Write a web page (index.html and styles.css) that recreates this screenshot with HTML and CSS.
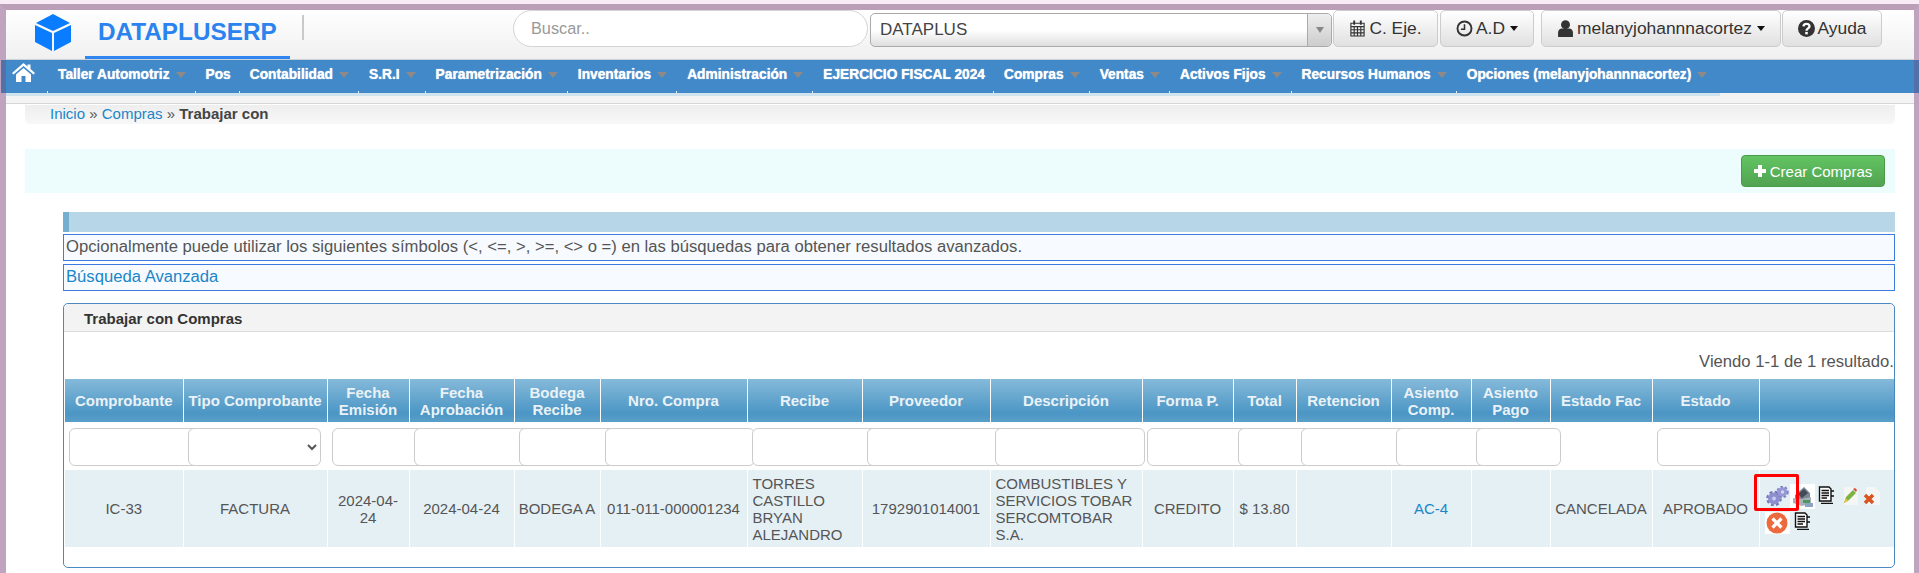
FILE: index.html
```html
<!DOCTYPE html>
<html lang="es">
<head>
<meta charset="utf-8">
<title>DATAPLUSERP</title>
<link rel="stylesheet" href="styles.css">
</head>
<body>
<div class="frame">
  <header class="top">
    <svg class="cube" viewBox="0 0 36 37"><path fill="#0a7cff" d="M18 0 35 9 18 17 1 9Z"/><path fill="#0a7cff" d="M0 11 17 19V37L0 28Z"/><path fill="#0a7cff" d="M36 11 19 19V37L36 28Z"/></svg>
    <div class="brand">DATAPLUSERP</div>
    <div class="vline"></div>
    <input class="search" type="text" placeholder="Buscar..">
    <div class="combo"><span class="combo-text">DATAPLUS</span><span class="combo-arrow"><i></i></span></div>
    <a class="btn b1"><svg class="ic" viewBox="0 0 16 18"><path fill="none" stroke="#333" stroke-width="1.2" d="M1 3.5H15V17H1ZM1 7H15M1 10.3H15M1 13.6H15M4.5 7V17M8 7V17M11.5 7V17"/><path stroke="#333" stroke-width="2" d="M4.5 0.5V5M11.5 0.5V5"/></svg>C. Eje.</a>
    <a class="btn b2"><svg class="ic" viewBox="0 0 16 16"><circle cx="8" cy="8" r="6.6" fill="none" stroke="#333" stroke-width="1.8"/><path fill="none" stroke="#333" stroke-width="1.5" d="M8 4V8.7H4.6"/></svg>A.D<i class="dd"></i></a>
    <a class="btn b3"><svg class="ic" viewBox="0 0 14 16"><circle cx="7" cy="4.4" r="4.2" fill="#333"/><path fill="#333" d="M0 16V11.5C0 9.5 2 8 3.5 8H10.500C12 8 14 9.500 14 11.500V16Z"/></svg>melanyjohannnacortez<i class="dd"></i></a>
    <a class="btn b4"><svg class="ic" viewBox="0 0 16 16"><circle cx="8" cy="8" r="8" fill="#333"/><path fill="none" stroke="#fff" stroke-width="2.200" d="M5.200 6C5.300 2.800 10.800 2.800 10.800 5.900C10.800 8 8 7.800 8 10"/><rect x="6.800" y="11.200" width="2.400" height="2.300" fill="#fff"/></svg>Ayuda</a>
  </header>
  <nav class="nav">
    <a class="home"><svg viewBox="0 0 23 19"><path fill="#fff" d="M11.500 0 15.500 3.500V1.500H18.500V6L23 10 21.500 11.500 11.500 3 1.500 11.500 0 10Z"/><path fill="#fff" d="M4 11.500 11.500 5 19 11.500V19H13.500V13H9.500V19H4Z"/></svg></a>
    <a class="item">Taller Automotriz<i class="car"></i></a>
    <a class="item">Pos</a>
    <a class="item">Contabilidad<i class="car"></i></a>
    <a class="item">S.R.I<i class="car"></i></a>
    <a class="item">Parametrización<i class="car"></i></a>
    <a class="item">Inventarios<i class="car"></i></a>
    <a class="item">Administración<i class="car"></i></a>
    <a class="item">EJERCICIO FISCAL 2024</a>
    <a class="item">Compras<i class="car"></i></a>
    <a class="item">Ventas<i class="car"></i></a>
    <a class="item">Activos Fijos<i class="car"></i></a>
    <a class="item">Recursos Humanos<i class="car"></i></a>
    <a class="item">Opciones (melanyjohannnacortez)<i class="car"></i></a>
  </nav>
  <div class="substrip"><div class="substrip-a"></div></div>
  <main class="wrap">
    <div class="crumb"><a>Inicio</a> » <a>Compras</a> » <b>Trabajar con</b></div>
    <div class="actions"><a class="create"><svg viewBox="0 0 12 12"><path fill="#fff" d="M4 0H8V4H12V8H8V12H4V8H0V4H4Z"/></svg>Crear Compras</a></div>
    <section class="inner">
      <div class="bluebar"></div>
      <div class="note">Opcionalmente puede utilizar los siguientes símbolos (&lt;, &lt;=, &gt;, &gt;=, &lt;&gt; o =) en las búsquedas para obtener resultados avanzados.</div>
      <div class="note note2"><a>Búsqueda Avanzada</a></div>
      <div class="panel">
        <div class="panel-head">Trabajar con Compras</div>
        <div class="summary">Viendo 1-1 de 1 resultado.</div>
        <table class="grid">
          <colgroup>
            <col class="c1"><col class="c2"><col class="c3"><col class="c4"><col class="c5"><col class="c6"><col class="c7"><col class="c8"><col class="c9"><col class="c10"><col class="c11"><col class="c12"><col class="c13"><col class="c14"><col class="c15"><col class="c16"><col class="c17">
          </colgroup>
          <thead>
            <tr>
              <th>Comprobante</th><th>Tipo Comprobante</th><th>Fecha Emisión</th><th>Fecha Aprobación</th><th>Bodega Recibe</th><th>Nro. Compra</th><th>Recibe</th><th>Proveedor</th><th>Descripción</th><th>Forma P.</th><th>Total</th><th>Retencion</th><th>Asiento Comp.</th><th>Asiento Pago</th><th>Estado Fac</th><th>Estado</th><th></th>
            </tr>
            <tr class="filters">
              <td><input class="fi" type="text"></td>
              <td><select class="fs"><option></option></select></td>
              <td><input class="fi" type="text"></td>
              <td><input class="fi" type="text"></td>
              <td><input class="fi" type="text"></td>
              <td><input class="fi" type="text"></td>
              <td><input class="fi" type="text"></td>
              <td><input class="fi" type="text"></td>
              <td><input class="fi" type="text"></td>
              <td><input class="fi" type="text"></td>
              <td><input class="fi" type="text"></td>
              <td><input class="fi" type="text"></td>
              <td><input class="fi" type="text"></td>
              <td><input class="fi fi-pago" type="text"></td>
              <td></td>
              <td><input class="fi fi-estado" type="text"></td>
              <td></td>
            </tr>
          </thead>
          <tbody>
            <tr class="row">
              <td>IC-33</td>
              <td>FACTURA</td>
              <td>2024-04-24</td>
              <td>2024-04-24</td>
              <td class="nw">BODEGA A</td>
              <td class="nw">011-011-000001234</td>
              <td class="l">TORRES CASTILLO BRYAN ALEJANDRO</td>
              <td>1792901014001</td>
              <td class="l">COMBUSTIBLES Y SERVICIOS TOBAR SERCOMTOBAR S.A.</td>
              <td>CREDITO</td>
              <td>$ 13.80</td>
              <td></td>
              <td><a>AC-4</a></td>
              <td></td>
              <td class="nw">CANCELADA</td>
              <td>APROBADO</td>
              <td class="tools">
                <div class="acts">
                  <svg class="i-gears" viewBox="0 0 25 20"><circle cx="9" cy="12.500" r="6.500" fill="none" stroke="#7376ba" stroke-width="2.600" stroke-dasharray="2.800 2.300"/><circle cx="9" cy="12.500" r="6" fill="#8d8fcf"/><circle cx="9" cy="12.500" r="2" fill="#c9cbee"/><circle cx="17.500" cy="6" r="5" fill="none" stroke="#7a7dbf" stroke-width="2.400" stroke-dasharray="2.300 1.900"/><circle cx="17.500" cy="6" r="4.800" fill="#9698d6"/><circle cx="17.500" cy="6" r="1.700" fill="#d2d4f2"/></svg>
                  <svg class="i-print" viewBox="0 0 25 25"><rect width="25" height="25" fill="#fff"/><path fill="#7b8794" d="M5 11 14 3 20 9V17H5Z"/><path fill="#434a58" d="M8 10 14 5 18 9 12 14Z"/><path fill="#a9b1bb" d="M3 14 12 15 21 13V20L12 22 3 19Z"/><rect x="13" y="16" width="7" height="3" fill="#4c9a5b"/><path fill="#8da3c4" d="M15 19H23V23H15Z"/></svg>
                  <svg class="i-doc" viewBox="0 0 17 18"><path fill="#fff" stroke="#111" stroke-width="1.400" d="M1.500 1H11L13 3V15H1.500Z"/><path stroke="#111" stroke-width="1.300" d="M3.500 4.500H11M3.500 7H11M3.500 9.500H11M3.500 12H9M13 5H16M13 10H16M3 17.300H15"/></svg>
                  <svg class="i-pencil" viewBox="0 0 16 18"><path fill="#f4f6f5" d="M2 0H11L16 4V18H2Z"/><path fill="#7cb342" d="M2 16 4 10 11 3 14 6 7 13Z"/><path fill="#d84a3a" d="M11 2 13 1 15 3 14 5Z"/><path fill="#e3c24e" d="M2 16 3.500 11 6.500 14Z"/></svg>
                  <svg class="i-del" viewBox="0 0 17 18"><path fill="#f4f6f5" d="M3 0H12L17 5V18H3Z"/><path stroke="#d9531e" stroke-width="3.500" d="M2 8 10 16M10 8 2 16"/></svg>
                  <svg class="i-cancel" viewBox="0 0 25 22"><rect width="25" height="22" fill="#fff"/><circle cx="12" cy="11" r="10.500" fill="#ec6b3e"/><path stroke="#fff" stroke-width="3.200" d="M7.500 6.500 16.500 15.500M16.500 6.500 7.500 15.500"/></svg>
                  <svg class="i-doc i-doc2" viewBox="0 0 17 18"><path fill="#fff" stroke="#111" stroke-width="1.400" d="M1.500 1H11L13 3V15H1.500Z"/><path stroke="#111" stroke-width="1.300" d="M3.500 4.500H11M3.500 7H11M3.500 9.500H11M3.500 12H9M13 5H16M13 10H16M3 17.300H15"/></svg>
                </div>
                <div class="mark"></div>
              </td>
            </tr>
          </tbody>
        </table>
      </div>
    </section>
  </main>
</div>
</body>
</html>
```
FILE: styles.css
```css
* { box-sizing: border-box; }
html, body { margin: 0; padding: 0; height: 100%; overflow: hidden; }
body {
  background: #f9ecf6;
  padding-top: 4px;
  font-family: "Liberation Sans", Arial, sans-serif;
  font-size: 15px;
  color: #555;
}
a { color: #1a86c8; text-decoration: none; }
.frame {
  height: 569px;
  background: #fff;
  border-top: 6px solid #bb9eb8;
  border-left: 6px solid #c0a3bf;
  border-right: 5px solid #c0a3bf;
}

/* header */
.top {
  display: flex;
  align-items: flex-start;
  height: 50px;
  background: linear-gradient(#fff, #f0f0f0);
  border-bottom: 1px solid #c8d2d8;
}
.cube { width: 36px; height: 37px; margin: 4px 0 0 29px; flex: none; }
.brand {
  width: 205px;
  height: 49px;
  margin-left: 14px;
  padding: 9px 0 0 13px;
  border-bottom: 3px solid #2f86f0;
  font-size: 24.300px;
  line-height: 26px;
  font-weight: bold;
  color: #2a83ee;
  flex: none;
}
.vline { width: 2px; height: 25px; margin: 5px 0 0 12px; background: #c9c9c9; flex: none; }
.search {
  width: 355px;
  height: 37px;
  margin-left: 209px;
  padding: 0 17px;
  border: 1px solid #d4d4d4;
  border-radius: 19px;
  background: #fff;
  font: 16.300px "Liberation Sans", Arial, sans-serif;
  flex: none;
}
.search::placeholder { color: #999; opacity: 1; }
.combo {
  display: flex;
  width: 462px;
  height: 34px;
  margin: 3px 0 0 2px;
  border: 1px solid #aaa;
  border-radius: 5px;
  background: linear-gradient(#fff 50%, #dedede);
  font-size: 17px;
  line-height: 32px;
  color: #444;
  flex: none;
}
.combo-text { flex: 1; padding-left: 9px; }
.combo-arrow {
  display: flex;
  align-items: center;
  justify-content: center;
  width: 24px;
  border-left: 1px solid #aaa;
  border-radius: 0 5px 5px 0;
  background: linear-gradient(#eee, #ccc);
}
.combo-arrow i { border: 4px solid transparent; border-top: 6px solid #888; border-bottom: 0; }
.btn {
  display: flex;
  align-items: center;
  justify-content: center;
  height: 37px;
  border: 1px solid #ccc;
  border-radius: 5px;
  background: linear-gradient(#fff, #e0e0e0);
  font-size: 17.400px;
  color: #333;
  flex: none;
}
.b1 { width: 105px; margin-left: 1px; }
.b2 { width: 94px; margin-left: 2px; }
.b3 { width: 240px; margin-left: 7px; }
.b4 { width: 100px; margin-left: 1px; }
.ic { height: 17px; width: 17px; margin-right: 3px; flex: none; }
.dd { margin-left: 5px; border: 4.500px solid transparent; border-top: 5px solid #111; border-bottom: 0; }

/* nav */
.nav {
  display: flex;
  align-items: flex-start;
  height: 33px;
  margin: 0 -5px 0 -5px;
  background: linear-gradient(90deg, #5470a8 5px, #4189c8 5px, #4189c8 calc(100% - 5px), #5470a8 calc(100% - 5px));
}
.home { width: 46px; padding: 3px 0 0 11px; flex: none; }
.home svg { display: block; width: 23px; height: 19px; }
.item {
  position: relative;
  display: flex;
  align-items: center;
  height: 33px;
  padding: 0 8px 4px 11px;
  font-size: 13.750px;
  font-weight: bold;
  color: #fff;
  white-space: nowrap;
  text-shadow: 0 0 1px #fff;
  flex: none;
}
.item::before {
  content: "";
  position: absolute;
  left: 0;
  bottom: 0;
  width: 1px;
  height: 2px;
  background: #e8f0f5;
}
.car { margin: 0 1px 0 6px; border: 5px solid transparent; border-top: 6px solid #8d8a88; border-bottom: 0; }

.substrip { height: 11px; background: #f3f3f3; border-bottom: 1px solid #d6d6d6; }
.substrip-a { width: 1714px; height: 3px; background: #cfe3ee; }

/* content */
.wrap { padding: 1px 19px 0; }
.crumb {
  height: 19px;
  padding-left: 25px;
  border-radius: 0 0 5px 5px;
  background: linear-gradient(#eee, #f7f7f7);
  font-size: 15px;
  line-height: 18px;
}
.crumb b { color: #444; }
.actions {
  display: flex;
  justify-content: flex-end;
  height: 44px;
  margin-top: 25px;
  padding: 6px 10px 0 0;
  background: #edfcfd;
}
.create {
  display: flex;
  align-items: center;
  justify-content: center;
  width: 144px;
  height: 32px;
  border: 1px solid #4a9a4a;
  border-radius: 4px;
  background: linear-gradient(#62c462, #51a351);
  color: #fff;
  font-size: 15px;
}
.create svg { width: 12px; height: 12px; margin-right: 4px; }
.inner { padding: 19px 0 0 38px; }
.bluebar { height: 20px; background: #b7d6e7; border-left: 6px solid #74aed1; }
.note {
  height: 27px;
  margin-top: 2px;
  padding-left: 2px;
  border: 1px solid #3d7be0;
  background: #f7fbff;
  font-size: 16.650px;
  line-height: 24px;
}
.note2 { margin-top: 3px; }
.panel {
  height: 265px;
  margin-top: 12px;
  padding: 0 0 0 1px;
  border: 1px solid #4a88c0;
  border-radius: 5px;
}
.panel-head {
  height: 28px;
  margin-left: -1px;
  padding-left: 20px;
  background: #f3f3f3;
  border-bottom: 1px solid #ddd;
  border-radius: 5px 5px 0 0;
  font-size: 15px;
  line-height: 30px;
  font-weight: bold;
  color: #333;
}
.summary {
  height: 47px;
  padding-top: 21px;
  text-align: right;
  font-size: 16.650px;
  line-height: 18px;
  white-space: nowrap;
}
.grid { width: 1829px; table-layout: fixed; border-collapse: collapse; }
.c1 { width: 118px; } .c2 { width: 144px; } .c3 { width: 82px; } .c4 { width: 105px; }
.c5 { width: 86px; } .c6 { width: 147px; } .c7 { width: 115px; } .c8 { width: 128px; }
.c9 { width: 152px; } .c10 { width: 91px; } .c11 { width: 63px; } .c12 { width: 95px; }
.c13 { width: 80px; } .c14 { width: 79px; } .c15 { width: 102px; } .c16 { width: 107px; } .c17 { width: 135px; }
.grid th {
  height: 43px;
  padding: 0 4px;
  border-right: 1px solid #fff;
  background: linear-gradient(#85b9d9, #4b96c5 80%, #5a9fc9);
  font-size: 15px;
  line-height: 17px;
  color: #eaf2f7;
  text-align: center;
  vertical-align: middle;
}
.grid th:last-child { border-right: 0; }
.filters td { height: 48px; padding: 5px 0 4px 5px; }
.filters td:first-child { padding-left: 4px; }
.fi, .fs {
  display: block;
  height: 38px;
  border: 1px solid #ccc;
  border-radius: 6px;
  background: #fff;
  position: relative;
}
.fi { width: 150px; }
.fs { width: 133px; font-size: 15px; color: #555; }
.fi-pago { width: 85px; }
.fi-estado { width: 113px; }
.row td {
  height: 77px;
  padding: 4px 5px;
  border-right: 1px solid #fff;
  background: #e5f0f5;
  font-size: 15px;
  line-height: 17px;
  text-align: center;
  vertical-align: middle;
}
.row td:last-child { border-right: 0; }
.row td.l { text-align: left; }
.row td.nw { padding: 4px 0; white-space: nowrap; }
.row td.tools { position: relative; padding: 14px 0 0 5px; vertical-align: top; }
.acts { display: flex; flex-wrap: wrap; align-items: flex-start; row-gap: 3px; width: 125px; }
.acts svg { flex: none; display: block; }
.i-gears { width: 25px; height: 20px; margin-top: 2px; }
.i-print { width: 25px; height: 25px; }
.i-doc { width: 17px; height: 18px; margin: 2px 0 0 3px; }
.i-pencil { width: 16px; height: 18px; margin: 3px 0 0 7px; }
.i-del { width: 17px; height: 18px; margin: 3px 0 0 5px; }
.i-cancel { width: 25px; height: 22px; }
.i-doc2 { margin: 0 0 0 4px; }
.mark {
  position: absolute;
  left: -6px;
  top: 4px;
  width: 45px;
  height: 37px;
  border: 3px solid #f00;
  border-radius: 2px;
}
```
